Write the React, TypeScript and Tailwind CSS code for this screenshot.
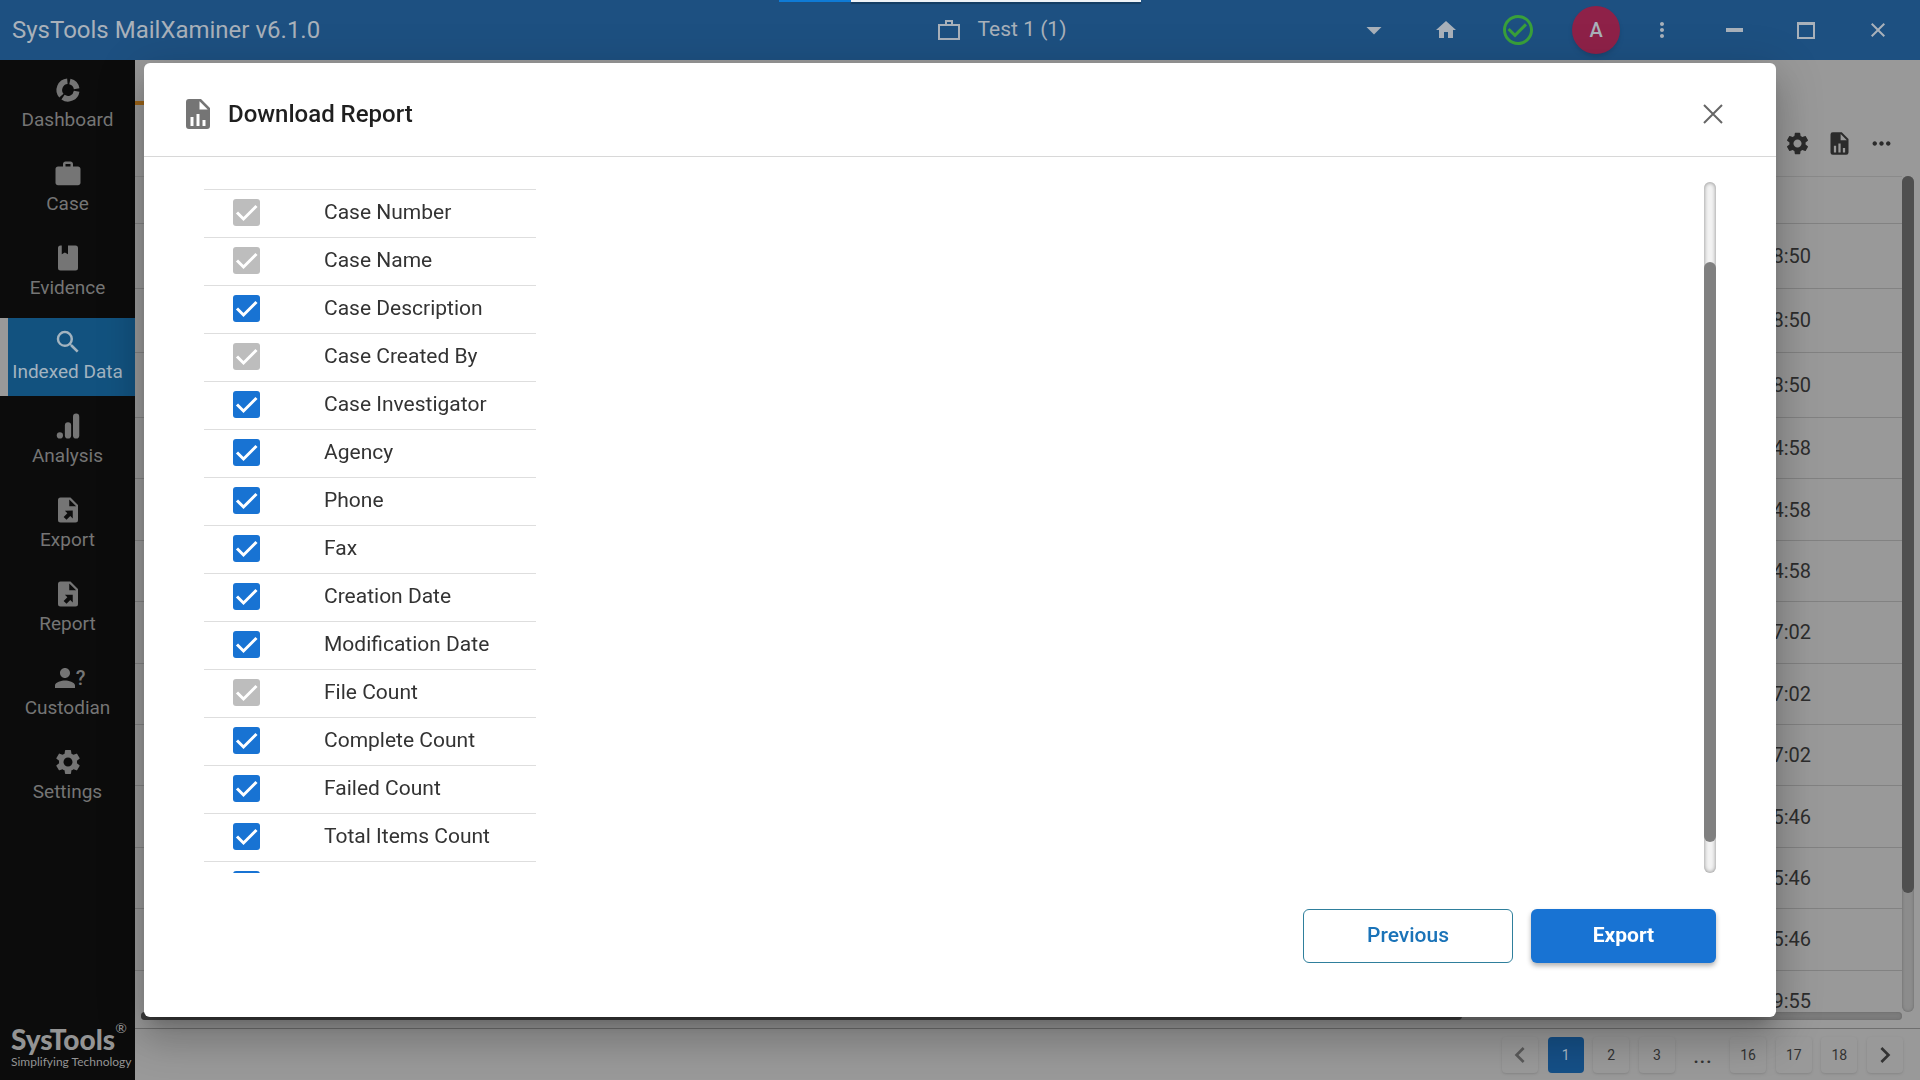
import type { ReactNode } from 'react';
import clsx from 'clsx';
import {
  MdArrowDropDown,
  MdCheckCircleOutline,
  MdChevronLeft,
  MdChevronRight,
  MdClose,
  MdHome,
  MdMoreHoriz,
  MdMoreVert,
  MdPerson,
  MdSearch,
  MdSettings,
  MdWork,
} from 'react-icons/md';

type IconProps = { className?: string };

function FileChartIcon({ className }: IconProps) {
  return (
    <svg viewBox="0 0 24 24" fill="currentColor" className={className} aria-hidden="true">
      <path d="M13 9h5.5L13 3.5V9M6 2h8l6 6v12a2 2 0 0 1-2 2H6a2 2 0 0 1-2-2V4a2 2 0 0 1 2-2m1 18h2v-6H7v6m4 0h2v-8h-2v8m4 0h2v-4h-2v4z" />
    </svg>
  );
}

function FileArrowIcon({ className }: IconProps) {
  return (
    <svg viewBox="0 0 24 24" fill="currentColor" className={className} aria-hidden="true">
      <path d="M6 2h8l6 6v12a2 2 0 0 1-2 2H6a2 2 0 0 1-2-2V4a2 2 0 0 1 2-2m7 1.500V9h5.500L13 3.500M9.500 12.500l2 2L8.500 17.500l2.300 2.300 3-3 2 2v-6.300z" />
    </svg>
  );
}

function BookIcon({ className }: IconProps) {
  return (
    <svg viewBox="0 0 24 24" fill="currentColor" className={className} aria-hidden="true">
      <path d="M18 22a2 2 0 0 0 2-2V4a2 2 0 0 0-2-2h-6v7L9.500 7.500 7 9V2H6a2 2 0 0 0-2 2v16a2 2 0 0 0 2 2z" />
    </svg>
  );
}

function DonutIcon({ className }: IconProps) {
  return (
    <svg viewBox="0 0 24 24" fill="none" stroke="currentColor" strokeWidth="4.500" className={className} aria-hidden="true">
      <path d="M13.500 5.140A7 7 0 0 1 18.930 11" />
      <path d="M18.930 13A7 7 0 0 1 8 17.740" />
      <path d="M6.700 16.500A7 7 0 0 1 11.500 5.020" />
    </svg>
  );
}

function BarsIcon({ className }: IconProps) {
  return (
    <svg viewBox="0 0 24 24" fill="currentColor" className={className} aria-hidden="true">
      <rect x="16" y="2" width="5" height="20" rx="2.500" />
      <rect x="9.500" y="9" width="5" height="13" rx="2.500" />
      <circle cx="5.500" cy="19.500" r="2.500" />
    </svg>
  );
}

function PersonQuestionIcon() {
  return (
    <span className="flex h-[30px] items-center text-xl leading-6 font-medium">
      <MdPerson className="-mr-1 size-[30px]" />?
    </span>
  );
}

const navItems: { label: string; icon: ReactNode }[] = [
  { label: 'Dashboard', icon: <DonutIcon className="size-[30px]" /> },
  { label: 'Case', icon: <MdWork className="size-[30px]" /> },
  { label: 'Evidence', icon: <BookIcon className="size-[30px]" /> },
  { label: 'Indexed Data', icon: <MdSearch className="size-[30px]" /> },
  { label: 'Analysis', icon: <BarsIcon className="size-[30px]" /> },
  { label: 'Export', icon: <FileArrowIcon className="size-[30px]" /> },
  { label: 'Report', icon: <FileArrowIcon className="size-[30px]" /> },
  { label: 'Custodian', icon: <PersonQuestionIcon /> },
  { label: 'Settings', icon: <MdSettings className="size-[30px]" /> },
];

const fields = [
  { label: 'Case Number', locked: true },
  { label: 'Case Name', locked: true },
  { label: 'Case Description' },
  { label: 'Case Created By', locked: true },
  { label: 'Case Investigator' },
  { label: 'Agency' },
  { label: 'Phone' },
  { label: 'Fax' },
  { label: 'Creation Date' },
  { label: 'Modification Date' },
  { label: 'File Count', locked: true },
  { label: 'Complete Count' },
  { label: 'Failed Count' },
  { label: 'Total Items Count' },
  { label: '' },
];

const recentTimes = ['8:50', '8:50', '8:50'];
const olderTimes = ['4:58', '4:58', '4:58', '7:02', '7:02', '7:02', '5:46', '5:46', '5:46', '9:55'];
const pages = ['1', '2', '3', '...', '16', '17', '18'];

function TopBar() {
  return (
    <header className="relative flex h-[60px] items-center bg-[#1d5081] text-[#a9b1ba]">
      <div className="absolute top-0 left-[779px] flex h-[2px] w-[362px]">
        <div className="w-[72px] bg-[#0f7bd6]" />
        <div className="flex-1 bg-[#eef3f7] shadow-[0_2px_1px_#153c62]" />
      </div>
      <h1 className="flex-1 pl-3 text-2xl">SysTools MailXaminer v6.1.0</h1>
      <div className="flex items-center gap-[18px] pl-[78px] text-[21px]">
        <svg viewBox="0 0 22 20" fill="none" stroke="currentColor" strokeWidth="2" className="h-5 w-[22px]" aria-hidden="true">
          <path d="M1 5h20v14H1zM8 5V1h6v4" />
        </svg>
        Test 1 (1)
      </div>
      <div className="flex flex-1 items-center justify-end pr-[6px]">
        <button aria-label="Switch case" className="flex w-[72px] justify-center">
          <MdArrowDropDown className="size-9" />
        </button>
        <button aria-label="Home" className="flex w-[72px] justify-center">
          <MdHome className="size-6" />
        </button>
        <button aria-label="Status" className="flex w-[72px] justify-center text-[#39a03a]">
          <MdCheckCircleOutline className="size-9" />
        </button>
        <div className="flex w-[84px] justify-center">
          <button className="size-12 rounded-full bg-[#8e2148] text-xl font-medium shadow-md">A</button>
        </div>
        <button aria-label="More" className="mr-3 flex w-12 justify-center">
          <MdMoreVert className="size-6" />
        </button>
        <button aria-label="Minimize" className="flex w-[72px] justify-center">
          <span className="h-1 w-[17px] bg-current" />
        </button>
        <button aria-label="Maximize" className="flex w-[72px] justify-center">
          <span className="h-[17px] w-[18px] border-2 border-t-[3px] border-current" />
        </button>
        <button aria-label="Close window" className="flex w-[72px] justify-center">
          <MdClose className="size-6" />
        </button>
      </div>
    </header>
  );
}

function Sidebar() {
  return (
    <aside className="flex w-[135px] shrink-0 flex-col justify-between bg-[#0c0c0c] pt-[6px] pb-3">
      <nav className="flex flex-col gap-[6px]">
        {navItems.map(({ label, icon }) => {
          const active = label === 'Indexed Data';
          return (
            <a
              key={label}
              href="#"
              className={clsx(
                'flex h-[78px] flex-col items-center gap-[3px] pt-[9px] text-[19px] leading-6 whitespace-nowrap',
                active
                  ? 'bg-[#12527f] text-[#a3b4c0] shadow-[inset_8px_0_0_#999]'
                  : 'text-[#757575]',
              )}
            >
              {icon}
              {label}
            </a>
          );
        })}
      </nav>
      <div className="pl-[11px] font-['Lato',sans-serif] text-[#949494]">
        <div className="flex">
          <span className="text-[28px] leading-[34px] font-black">SysTools</span>
          <span className="text-sm leading-3">®</span>
        </div>
        <div className="text-xs leading-3 whitespace-nowrap">Simplifying Technology</div>
      </div>
    </aside>
  );
}

function TimeRow({ time }: { time: string }) {
  return (
    <div className="flex items-center justify-end border-b border-[#828282] pr-[91px] text-xl text-[#2d2d2d]">
      {time}
    </div>
  );
}

function Results() {
  return (
    <main className="flex min-w-0 flex-1 flex-col bg-[#999]">
      <div className="h-[45px] w-[220px] border-b-4 border-[#9c6418]" />
      <div className="flex h-[71px] items-center justify-end gap-[15px] pt-[5px] pr-[25px] text-[#2b2b2b]">
        <button aria-label="Table settings">
          <MdSettings className="size-[27px]" />
        </button>
        <button aria-label="Download report">
          <FileChartIcon className="size-[27px]" />
        </button>
        <button aria-label="More actions">
          <MdMoreHoriz className="size-[27px]" />
        </button>
      </div>
      <div className="flex h-[836px] pr-[6px]">
        <div className="flex-1 overflow-hidden border-t border-[#8a8a8a]">
          <div className="h-[47px] border-b border-[#828282]" />
          <div className="grid h-[194px] auto-rows-fr">
            {recentTimes.map((time, i) => (
              <TimeRow key={i} time={time} />
            ))}
          </div>
          <div className="grid h-[614px] auto-rows-fr">
            {olderTimes.map((time, i) => (
              <TimeRow key={i} time={time} />
            ))}
          </div>
        </div>
        <div className="w-3 rounded-full bg-[#8c8c8c] shadow-[inset_0_0_3px_#666]">
          <div className="h-[717px] rounded-full bg-[#4f4f4f]" />
        </div>
      </div>
      <div className="mr-[18px] ml-[6px] h-2 rounded-full bg-[#7c7c7c] shadow-[inset_0_0_3px_#666]">
        <div className="h-full w-3/4 rounded-full bg-[#3c3c3c]" />
      </div>
      <nav
        aria-label="Pages"
        className="mt-2 flex flex-1 items-center justify-end border-t border-[#6f6f6f] pr-[17px]"
      >
        <div className="flex w-[401px] items-center justify-between text-sm text-[#333]">
          <button aria-label="Previous page" className="flex size-9 items-center justify-center rounded text-[#5a5a5a] shadow">
            <MdChevronLeft className="size-8" />
          </button>
          {pages.map((page) =>
            page === '...' ? (
              <span key={page} className="w-9 text-center text-2xl">
                {page}
              </span>
            ) : (
              <button
                key={page}
                className={clsx('size-9 rounded', page === '1' ? 'bg-[#154f86] text-[#a9b9c8]' : 'shadow')}
              >
                {page}
              </button>
            ),
          )}
          <button aria-label="Next page" className="flex size-9 items-center justify-center rounded shadow">
            <MdChevronRight className="size-8" />
          </button>
        </div>
      </nav>
    </main>
  );
}

function Field({ label, locked = false }: { label: string; locked?: boolean }) {
  return (
    <li className="border-t border-[#dedede]">
      <label className="flex h-[47px] items-center pb-[2px] pl-[29px] text-[21px] text-[#333]">
        <span className="mr-16 grid size-[27px]">
          <input
            type="checkbox"
            defaultChecked
            disabled={locked}
            aria-label={label || 'Other'}
            className="peer col-start-1 row-start-1 appearance-none rounded-[3px] bg-[#1873d3] disabled:bg-[#bdbdbd]"
          />
          <svg
            viewBox="0 0 27 27"
            fill="none"
            stroke="white"
            strokeWidth="3"
            className="pointer-events-none invisible col-start-1 row-start-1 peer-checked:visible"
            aria-hidden="true"
          >
            <path d="M4 13.500l6.500 6.500L23.500 7" />
          </svg>
        </span>
        {label}
      </label>
    </li>
  );
}

function DownloadReportDialog() {
  return (
    <div className="fixed inset-0 flex items-center justify-center">
      <section
        role="dialog"
        aria-labelledby="dialog-title"
        className="w-[85%] rounded-md bg-white pb-[54px] shadow-[0_11px_15px_-7px_rgba(0,0,0,0.2),0_24px_38px_3px_rgba(0,0,0,0.14),0_9px_46px_8px_rgba(0,0,0,0.12)]"
      >
        <header className="flex h-[94px] items-center border-b border-[#d8d8d8] pt-2 pr-[53px] pl-9">
          <FileChartIcon className="size-9 text-[#757575]" />
          <h2 id="dialog-title" className="ml-3 flex-1 text-2xl font-medium text-[#1f1f1f]">
            Download Report
          </h2>
          <button aria-label="Close" className="text-[#666]">
            <svg viewBox="0 0 20 20" stroke="currentColor" strokeWidth="2" className="size-5" aria-hidden="true">
              <path d="M1 1l18 18M19 1L1 19" />
            </svg>
          </button>
        </header>
        <div className="px-[60px] pt-[25px]">
          <div className="flex h-[691px] justify-between">
            <ul className="w-[332px] overflow-hidden pt-[7px]">
              {fields.map((field) => (
                <Field key={field.label} {...field} />
              ))}
            </ul>
            <div className="w-3 rounded-full bg-[#f2f2f2] pt-20 shadow-[inset_0_0_4px_rgba(0,0,0,0.45)]">
              <div className="h-[580px] rounded-full bg-[#808080]" />
            </div>
          </div>
          <div className="mt-9 flex justify-end gap-[18px] text-[21px] font-medium">
            <button className="h-[54px] w-[210px] rounded-md border border-[#2f7f9c] text-[#1a73b8]">
              Previous
            </button>
            <button className="h-[54px] w-[185px] rounded-md bg-[#1873d3] font-bold text-white shadow-[0_3px_5px_rgba(0,0,0,0.3)]">
              Export
            </button>
          </div>
        </div>
      </section>
    </div>
  );
}

export default function App() {
  return (
    <div className="flex h-screen flex-col overflow-hidden font-['Roboto',sans-serif]">
      <TopBar />
      <div className="flex min-h-0 flex-1">
        <Sidebar />
        <Results />
      </div>
      <DownloadReportDialog />
    </div>
  );
}
